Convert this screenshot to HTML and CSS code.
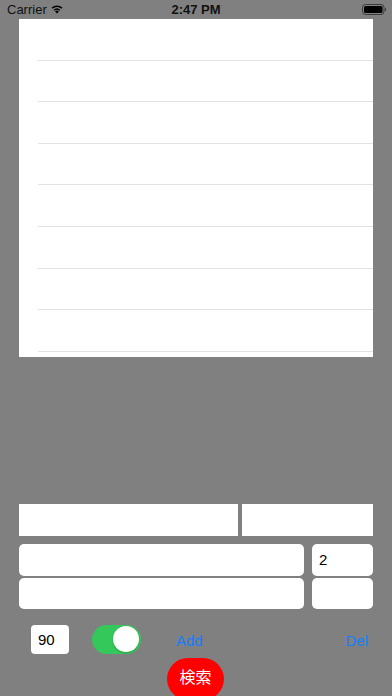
FILE: index.html
```html
<!DOCTYPE html>
<html lang="en">
<head>
    <meta charset="UTF-8">
    <meta name="viewport" content="width=device-width, initial-scale=1.0">
    <title>Search</title>
    <link rel="stylesheet" href="styles.css">
</head>
<body>
    <!-- Status bar -->
    <div class="status-bar">
        <div class="status-left">
            <span class="carrier">Carrier</span>
            <svg class="wifi" width="12" height="10" viewBox="0 0 12 10">
                <path d="M6 9.6 L4.1 7.4 A2.8 2.8 0 0 1 7.9 7.4 Z" fill="#000"/>
                <path d="M2.7 5.8 A4.9 4.9 0 0 1 9.3 5.8 L8.4 6.8 A3.6 3.6 0 0 0 3.6 6.8 Z" fill="#000"/>
                <path d="M0.6 3.6 A7.9 7.9 0 0 1 11.4 3.6 L10.4 4.7 A6.5 6.5 0 0 0 1.6 4.7 Z" fill="#000"/>
            </svg>
        </div>
        <span class="time">2:47 PM</span>
        <svg class="battery" width="25" height="11" viewBox="0 0 25 11">
            <rect x="0.5" y="0.5" width="21.5" height="10" rx="3" fill="none" stroke="#3a3a3a" stroke-width="1"/>
            <rect x="2" y="2" width="18.5" height="7" rx="1.6" fill="#000"/>
            <path d="M23 3.8 A1.8 1.8 0 0 1 23 7.2 Z" fill="#3a3a3a"/>
        </svg>
    </div>

    <!-- Result list -->
    <div class="result-table">
        <div class="row"></div>
        <div class="row"></div>
        <div class="row"></div>
        <div class="row"></div>
        <div class="row"></div>
        <div class="row"></div>
        <div class="row"></div>
        <div class="row"></div>
    </div>

    <!-- Input fields -->
    <div class="form">
        <div class="field-row first">
            <div class="field plain wide"></div>
            <div class="field plain narrow"></div>
        </div>
        <div class="field-row second">
            <div class="field round main"></div>
            <div class="field round side">2</div>
        </div>
        <div class="field-row third">
            <div class="field round main"></div>
            <div class="field round side"></div>
        </div>
    </div>

    <!-- Controls -->
    <div class="controls">
        <div class="small-field">90</div>
        <div class="switch"><div class="knob"></div></div>
        <span class="link add">Add</span>
        <span class="link del">Del</span>
    </div>

    <div class="search-wrap">
        <div class="search-button">検索</div>
    </div>
</body>
</html>
```

FILE: styles.css
```css
body {
    margin: 0;
    background-color: #808080;
    font-family: "Liberation Sans", Arial, "Noto Sans CJK JP", sans-serif;
    color: #000;
    width: 392px;
    height: 696px;
    overflow: hidden;
}

/* Status bar */
.status-bar {
    height: 19px;
    display: flex;
    align-items: center;
    justify-content: space-between;
    padding: 0 5px 0 7px;
    position: relative;
}

.status-left {
    display: flex;
    align-items: center;
    gap: 4px;
}

.carrier {
    font-size: 13px;
    color: #111;
}

.wifi {
    margin-top: -1px;
}

.time {
    position: absolute;
    left: 0;
    right: 0;
    text-align: center;
    font-size: 13px;
    font-weight: bold;
    color: #111;
    pointer-events: none;
}

/* Result list */
.result-table {
    margin: 0 19px;
    height: 338px;
    background-color: #fff;
    overflow: hidden;
}

.row {
    height: 41.6px;
    box-sizing: border-box;
    margin-left: 19px;
    border-bottom: 1px solid #e2e2e2;
}

/* Input fields */
.form {
    margin: 147px 19px 0;
}

.field-row {
    display: flex;
}

.field-row.first {
    gap: 4px;
    height: 31.5px;
}

.field-row.second {
    margin-top: 8px;
    gap: 8px;
    height: 32px;
}

.field-row.third {
    margin-top: 2px;
    gap: 8px;
    height: 31px;
}

.field {
    background-color: #fff;
    box-sizing: border-box;
    font-size: 15px;
    display: flex;
    align-items: center;
    padding-left: 7px;
}

.field.wide {
    width: 219px;
}

.field.narrow {
    flex: 1;
}

.field.round {
    border-radius: 5px;
}

.field.main {
    width: 285px;
}

.field.side {
    flex: 1;
}

/* Controls */
.controls {
    display: flex;
    align-items: center;
    height: 29px;
    margin-top: 16px;
    padding-left: 31px;
}

.small-field {
    width: 38px;
    height: 29px;
    box-sizing: border-box;
    background-color: #fff;
    border-radius: 4px;
    font-size: 15px;
    padding-left: 7px;
    display: flex;
    align-items: center;
}

.switch {
    margin-left: 23px;
    width: 49px;
    height: 29px;
    border-radius: 15px;
    background-color: #34c759;
    display: flex;
    align-items: center;
    justify-content: flex-end;
    padding-right: 2px;
    box-sizing: border-box;
}

.knob {
    width: 26px;
    height: 26px;
    border-radius: 50%;
    background-color: #fff;
    box-shadow: 0 1px 2px rgba(0, 0, 0, 0.2);
}

.link {
    color: #157efb;
    font-size: 15px;
    margin-top: 3px;
}

.add {
    margin-left: 35px;
}

.del {
    margin-left: auto;
    margin-right: 24px;
}

/* Search button */
.search-wrap {
    display: flex;
    justify-content: center;
    margin-top: 4px;
    padding-right: 1px;
}

.search-button {
    width: 57px;
    height: 42px;
    border-radius: 21px;
    background-color: #ff0000;
    color: #fff;
    font-size: 16px;
    display: flex;
    align-items: center;
    justify-content: center;
    padding-bottom: 5px;
    box-sizing: border-box;
    font-family: "Noto Sans CJK JP", sans-serif;
}
```
